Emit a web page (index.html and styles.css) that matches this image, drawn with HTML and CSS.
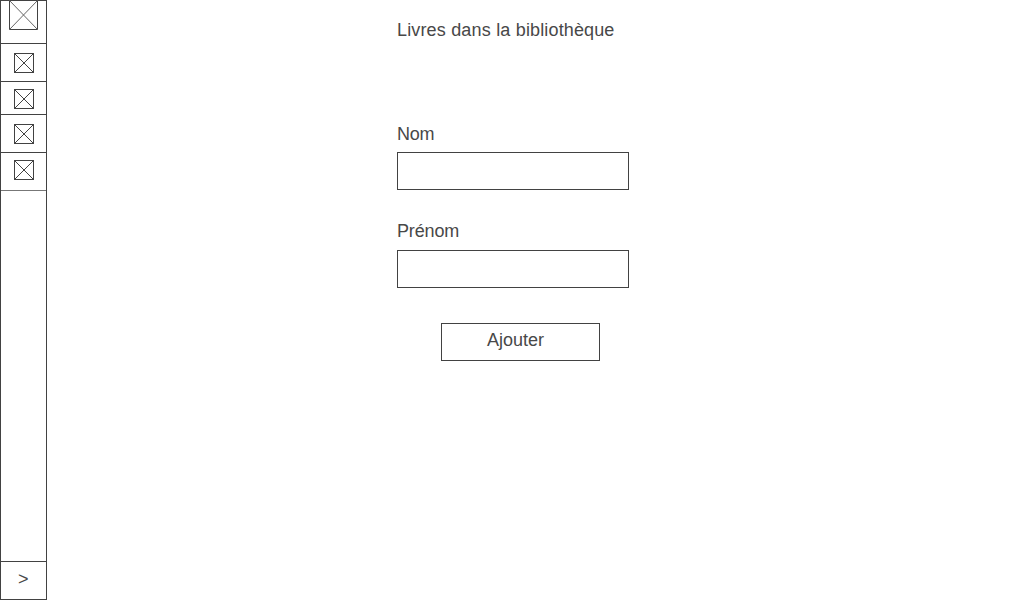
FILE: index.html
```html
<!DOCTYPE html>
<html lang="fr">
<head>
<meta charset="utf-8">
<title>Livres dans la bibliothèque</title>
<link rel="stylesheet" href="styles.css">
</head>
<body>
<div class="app">
<nav class="sidebar">
<div class="cell cell-logo"><svg class="logo" viewBox="0 0 29 30"><path d="M.5.5h28v29H.5z"/><path class="cross" d="M.5.5L28.500 29.500M28.500.5L.5 29.500"/></svg></div>
<div class="cell cell-a"><svg class="icon" viewBox="0 0 20 20"><path d="M.5.5h19v19H.5zL19.500 19.500M19.500.5L.5 19.500"/></svg></div>
<div class="cell cell-b"><svg class="icon" viewBox="0 0 20 20"><path d="M.5.5h19v19H.5zL19.500 19.500M19.500.5L.5 19.500"/></svg></div>
<div class="cell cell-c"><svg class="icon" viewBox="0 0 20 20"><path d="M.5.5h19v19H.5zL19.500 19.500M19.500.5L.5 19.500"/></svg></div>
<div class="cell cell-d"><svg class="icon" viewBox="0 0 20 20"><path d="M.5.5h19v19H.5zL19.500 19.500M19.500.5L.5 19.500"/></svg></div>
<div class="spacer"></div>
<div class="expand">&gt;</div>
</nav>
<main class="content">
<h1 class="title">Livres dans la bibliothèque</h1>
<form class="form">
<label class="label" for="nom">Nom</label>
<input class="input" id="nom" type="text">
<label class="label label-next" for="prenom">Prénom</label>
<input class="input" id="prenom" type="text">
<button class="button" type="button">Ajouter</button>
</form>
</main>
</div>
</body>
</html>
```
FILE: styles.css
```css
* { box-sizing: border-box; }
body {
  margin: 0;
  background: #fff;
  color: #484848;
  font: 18px/20px "Liberation Sans", Arial, sans-serif;
}
.app { display: flex; height: 600px; }
.sidebar {
  display: flex;
  flex-direction: column;
  width: 47px;
  border: 1px solid #424242;
}
.cell {
  flex: none;
  border-bottom: 1px solid #424242;
}
.cell-logo { height: 44px; margin-top: -1px; padding-left: 8px; }
.cell-a { height: 38px; padding: 9px 0 0 13px; }
.cell-b { height: 33px; padding: 7px 0 0 13px; }
.cell-c { height: 38px; padding: 9px 0 0 13px; }
.cell-d { height: 38px; padding: 7px 0 0 13px; border-bottom-color: #777; }
.logo, .icon { display: block; fill: none; stroke: #424242; stroke-width: 1; }
.logo { width: 29px; height: 30px; }
.cross { stroke: #666; }
.icon { width: 20px; height: 20px; shape-rendering: crispEdges; }
.spacer { flex: 1; }
.expand {
  height: 38px;
  border-top: 1px solid #424242;
  padding: 7px 0 0 17px;
}
.content { width: 232px; margin-left: 350px; padding-top: 20px; }
.title { margin: 0; font-size: inherit; font-weight: 400; letter-spacing: .14px; word-spacing: .2px; white-space: nowrap; }
.form { display: flex; flex-direction: column; margin-top: 84px; }
.label { height: 20px; letter-spacing: -.3px; }
.label-next { margin-top: 31px; letter-spacing: -.15px; }
.input {
  width: 232px;
  height: 38px;
  margin: 8px 0 0;
  padding: 0 8px;
  border: 1px solid #424242;
  background: #fff;
  font: inherit;
}
.label-next + .input { margin-top: 9px; }
.button {
  width: 159px;
  height: 38px;
  margin: 35px 0 0 44px;
  padding: 0 10px 4px 0;
  border: 1px solid #424242;
  background: #fff;
  color: inherit;
  font: inherit;
}
```
